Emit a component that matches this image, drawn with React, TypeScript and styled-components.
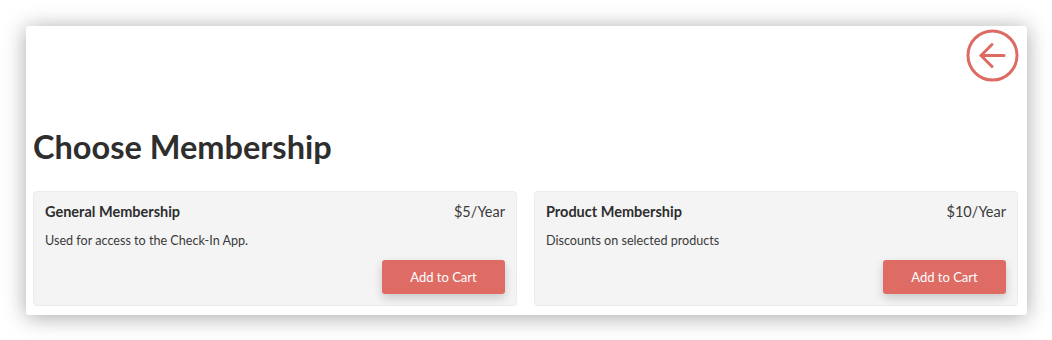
import * as React from 'react';
import styled, { createGlobalStyle } from 'styled-components';

const GlobalStyle = createGlobalStyle`
    body {
        margin: 0;
        background: #ffffff;
        font-family: Lato, 'Liberation Sans', sans-serif;
        color: #333333;
    }
`;

const Page = styled.div`
    padding: 26px 25px 25px 26px;
`;

const Panel = styled.div`
    width: 1001px;
    box-sizing: border-box;
    background: #ffffff;
    border-radius: 3px;
    box-shadow: 0 2px 22px rgba(0, 0, 0, 0.35);
    padding: 3px 9px 9px 7px;
`;

const TopBar = styled.div`
    display: flex;
    justify-content: flex-end;
    height: 96px;
`;

const BackButton = styled.button`
    width: 53px;
    height: 53px;
    padding: 0;
    margin-right: -1px;
    border: none;
    background: none;
    cursor: pointer;
    color: #dd6b63;
`;

const Heading = styled.h1`
    margin: 0 0 22px 0;
    font-size: 32.5px;
    font-weight: 700;
    line-height: 44px;
    color: #2e2e2e;
`;

const CardGrid = styled.div`
    display: grid;
    grid-template-columns: 1fr 1fr;
    gap: 17px;
`;

const Card = styled.div`
    background: #f4f4f4;
    border: 1px solid #ebebeb;
    border-radius: 4px;
    padding: 11px 11px 11px 11px;
    display: flex;
    flex-direction: column;
`;

const CardHeader = styled.div`
    display: flex;
    justify-content: space-between;
    align-items: baseline;
    font-size: 14.5px;
    line-height: 18px;
`;

const CardTitle = styled.span`
    font-weight: 700;
    color: #2e2e2e;
`;

const Price = styled.span`
    color: #3a3a3a;
`;

const Description = styled.p`
    margin: 11px 0 0 0;
    font-size: 12.6px;
    line-height: 18px;
    color: #3a3a3a;
`;

const Actions = styled.div`
    display: flex;
    justify-content: flex-end;
    margin-top: 10px;
`;

const CartButton = styled.button`
    width: 123px;
    height: 34px;
    border: none;
    border-radius: 3px;
    background: #de6c65;
    color: #ffffff;
    font-family: inherit;
    font-size: 13px;
    cursor: pointer;
    box-shadow: 0 4px 10px rgba(0, 0, 0, 0.18);
`;

const memberships = [
    { name: 'General Membership', price: '$5/Year', description: 'Used for access to the Check-In App.' },
    { name: 'Product Membership', price: '$10/Year', description: 'Discounts on selected products' },
];

function BackIcon() {
    return (
        <svg width="53" height="53" viewBox="0 0 53 53" fill="none" stroke="currentColor" strokeWidth="3" strokeLinecap="round" strokeLinejoin="round">
            <circle cx="26.5" cy="26.5" r="24.5" />
            <path d="M38 26.5H15" />
            <path d="M26 15.5L15 26.5L26 37.5" />
        </svg>
    );
}

export default function App() {
    return (
        <Page>
            <GlobalStyle />
            <Panel>
                <TopBar>
                    <BackButton aria-label="Back">
                        <BackIcon />
                    </BackButton>
                </TopBar>
                <Heading>Choose Membership</Heading>
                <CardGrid>
                    {memberships.map((m) => (
                        <Card key={m.name}>
                            <CardHeader>
                                <CardTitle>{m.name}</CardTitle>
                                <Price>{m.price}</Price>
                            </CardHeader>
                            <Description>{m.description}</Description>
                            <Actions>
                                <CartButton>Add to Cart</CartButton>
                            </Actions>
                        </Card>
                    ))}
                </CardGrid>
            </Panel>
        </Page>
    );
}
